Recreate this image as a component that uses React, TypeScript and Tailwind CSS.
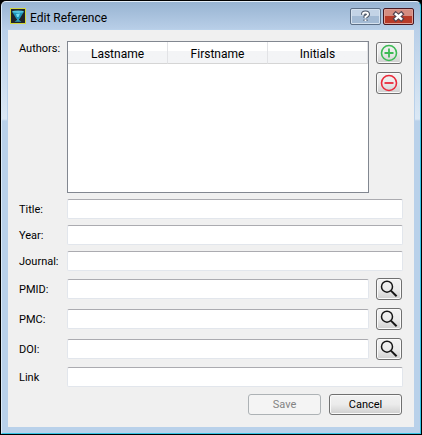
import { useState } from "react";
import type { ReactNode } from "react";

const labelText = "font-['Roboto',sans-serif] text-[11px] leading-4 text-black";
const fieldStyle =
  "block h-5 w-full min-w-0 rounded-[2px] border border-[#e2e6ec] border-t-[#ababb0] bg-white px-1 outline-none " + labelText;
const buttonStyle =
  "m-px rounded-[3px] border border-[#707070] bg-linear-to-b from-[#f2f2f2] from-0% via-[#ebebeb] via-50% to-[#cfcfcf] shadow-[inset_0_0_0_1px_#fafafa]";

function IconButton({ label, children }: { label: string; children: ReactNode }) {
  return (
    <button type="button" aria-label={label} className={`flex h-[22px] w-[26px] shrink-0 items-center justify-center ${buttonStyle}`}>
      {children}
    </button>
  );
}

function SearchIcon() {
  return (
    <svg width="18" height="18" viewBox="0 0 18 18" fill="none" stroke="#151515">
      <circle cx="7" cy="6.7" r="5.5" strokeWidth="1.5" />
      <path d="M10.9 10.6 L16.6 16.3" strokeWidth="2" />
    </svg>
  );
}

function CircleIcon({ color, plus }: { color: string; plus?: boolean }) {
  return (
    <svg width="18" height="18" viewBox="0 0 18 18" fill="none" stroke={color} strokeWidth="1.6">
      <circle cx="9" cy="9" r="7.5" />
      <path d={plus ? "M4.5 9 H13.5 M9 4.5 V13.5" : "M4.5 9 H13.5"} strokeWidth="1.8" />
    </svg>
  );
}

function AppIcon() {
  return (
    <svg width="16" height="16" viewBox="0 0 16 16" className="shrink-0">
      <rect x="0.5" y="0.5" width="15" height="15" fill="#20242a" stroke="#d3d63c" />
      <path d="M2 3.5 H14 L9.5 11 H6.5 Z" fill="#1f93b8" />
      <ellipse cx="8" cy="3.7" rx="5.8" ry="1.3" fill="#55c6e0" />
      <path d="M6 6 L10 5.5 L8.5 9 H7 Z" fill="#6fdcf0" />
      <path d="M7 10.5 H9 V12 L11.5 13.7 H4.5 L7 12 Z" fill="#2a9dbb" />
    </svg>
  );
}

const columns = ["Lastname", "Firstname", "Initials"];

const fields = [
  { id: "title", label: "Title:", search: false },
  { id: "year", label: "Year:", search: false },
  { id: "journal", label: "Journal:", search: false },
  { id: "pmid", label: "PMID:", search: true },
  { id: "pmc", label: "PMC:", search: true },
  { id: "doi", label: "DOI:", search: true },
  { id: "link", label: "Link", search: false },
];

export default function App() {
  const [values, setValues] = useState<Record<string, string>>({});

  return (
    <div className="bg-black p-px">
      <div className="rounded-t-[5px] border border-[#35c4e4] border-t-[#e4eef8] border-l-[#dcebf8] bg-[linear-gradient(to_bottom,#98b4d2_0px,#b9cfe8_28px,#dbe8f5_117px,#b9d1ea_119px)] px-1.5 pb-1.5">
        <header className="flex h-7 items-center gap-1 pl-0.5">
          <AppIcon />
          <h1 className="grow pt-1 font-['Roboto',sans-serif] text-xs leading-4 text-black">Edit Reference</h1>
          <button type="button" aria-label="Help" className="flex h-[17px] w-[31px] items-center justify-center rounded-[2px] border border-[#5c6e85] bg-linear-to-b from-[#c3d3e6] from-50% to-[#a3bad4] to-50% shadow-[inset_0_0_0_1px_#d6e2ef]">
            <svg width="11" height="13" viewBox="0 0 11 13" fill="none">
              <path d="M3 4.8 V4.3 Q3 2.5 5.5 2.5 T8 4.5 Q8 5.5 5.5 6.8 V8 M5.5 9.4 V11" stroke="#4b5567" strokeWidth="4" />
              <path d="M3 4.8 V4.3 Q3 2.5 5.5 2.5 T8 4.5 Q8 5.5 5.5 6.8 V8 M5.5 9.4 V11" stroke="#fff" strokeWidth="2" />
            </svg>
          </button>
          <button type="button" aria-label="Close" className="-ml-0.5 flex h-[17px] w-[31px] items-center justify-center rounded-[2px] border border-[#471821] bg-linear-to-b from-[#d58c80] from-50% to-[#b83a28] to-50% shadow-[inset_0_0_0_1px_#dfa096]">
            <svg width="13" height="11" viewBox="0 0 13 11" fill="none">
              <path d="M2 1.5 L11 9.5 M11 1.5 L2 9.5" stroke="#53434f" strokeWidth="4.6" />
              <path d="M3 2.4 L10 8.6 M10 2.4 L3 8.6" stroke="#fff" strokeWidth="2.6" />
            </svg>
          </button>
        </header>

        <form className="flex flex-col gap-1.5 bg-[#f0f0f0] p-[11px] shadow-[0_0_0_1px_#b9d1ea]" onSubmit={(e) => e.preventDefault()}>
          <div className="flex h-38 gap-1.5">
            <span id="authors-label" className={`-mr-1.5 w-12 shrink-0 ${labelText}`}>Authors:</span>
            <div className="grow border border-[#828790] bg-white">
              <table aria-labelledby="authors-label" className="w-full table-fixed border-separate border-spacing-0 font-['Roboto',sans-serif] text-xs text-black">
                <thead>
                  <tr className="bg-linear-to-b from-white from-40% to-[#f3f4f6] to-40%">
                    {columns.map((name) => (
                      <th key={name} className="h-[22px] border-r border-b border-r-[#e2e3e6] border-b-[#d5d5d5] p-0 pt-0.5 leading-4 font-normal">
                        {name}
                      </th>
                    ))}
                  </tr>
                </thead>
              </table>
            </div>
            <div className="flex flex-col gap-1.5">
              <IconButton label="Add author"><CircleIcon color="#3dba55" plus /></IconButton>
              <IconButton label="Remove author"><CircleIcon color="#ea2a3a" /></IconButton>
            </div>
          </div>

          {fields.map(({ id, label, search }) => (
            <div key={id} className="flex items-center">
              <label htmlFor={id} className={`w-12 shrink-0 pt-0.5 ${labelText}`}>{label}</label>
              <div className="flex grow items-center gap-1.5">
                <input
                  id={id}
                  type="text"
                  className={fieldStyle}
                  value={values[id] ?? ""}
                  onChange={(e) => setValues({ ...values, [id]: e.target.value })}
                />
                {search && <IconButton label={`Look up ${label}`}><SearchIcon /></IconButton>}
              </div>
            </div>
          ))}

          <div className="flex justify-end gap-1.5">
            <button type="button" disabled className="m-px h-[21px] w-[73px] rounded-[3px] border border-[#adb2b5] bg-[#f4f4f4] font-['Roboto',sans-serif] text-[11px] leading-4 text-[#838383]">
              Save
            </button>
            <button type="button" className={`h-[21px] w-[73px] ${buttonStyle} ${labelText}`}>Cancel</button>
          </div>
        </form>
      </div>
    </div>
  );
}
